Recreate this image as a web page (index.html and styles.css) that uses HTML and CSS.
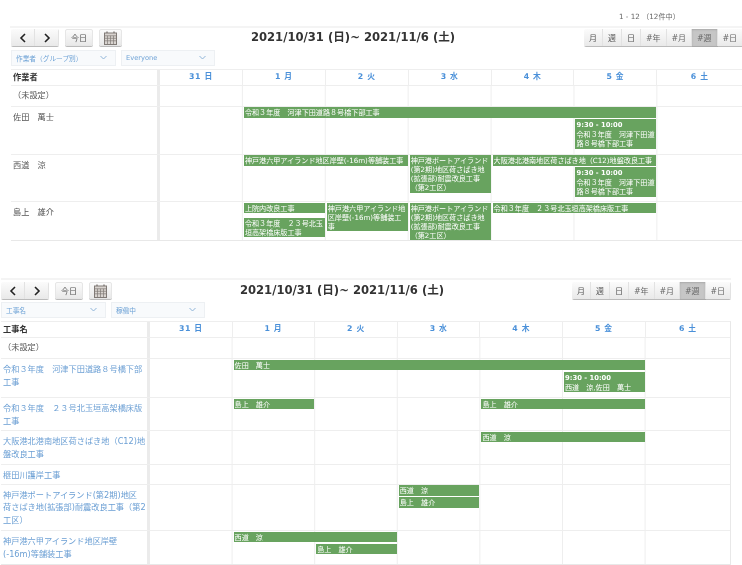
FILE: index.html
```html
<!DOCTYPE html>
<html lang="ja">
<head>
<meta charset="utf-8">
<title>週間スケジュール</title>
<link rel="stylesheet" href="styles.css">
</head>
<body>
<div class="pager">1 - 12 （12件中）</div>

<section class="panel panel-a">
  <div class="toolbar">
    <div class="btn-group nav"><button class="btn"><svg width="8" height="10" viewBox="0 0 8 10"><path d="M6 1 2 5l4 4" fill="none" stroke="#222" stroke-width="1.6"/></svg></button><button class="btn"><svg width="8" height="10" viewBox="0 0 8 10"><path d="M2 1l4 4-4 4" fill="none" stroke="#222" stroke-width="1.6"/></svg></button></div>
    <button class="btn solo today">今日</button>
    <button class="btn solo cal"><svg width="13" height="14" viewBox="0 0 13 14"><path d="M3 0.5v3M10 0.5v3" stroke="#807a76" stroke-width="1.4"/><rect x="0.5" y="2" width="12" height="11.5" fill="#d8d3cf" stroke="#807a76"/><path d="M0.5 4.8h12M0.5 7.3h12M0.5 9.8h12M3.5 4.8v8.7M6.5 4.8v8.7M9.5 4.8v8.7" stroke="#807a76" stroke-width=".7"/></svg></button>
    <h2 class="title">2021/10/31 (日)~ 2021/11/6 (土)</h2>
    <div class="btn-group views"><button class="btn v1">月</button><button class="btn v1">週</button><button class="btn v1">日</button><button class="btn v2">#年</button><button class="btn v2">#月</button><button class="btn v2 active">#週</button><button class="btn v2">#日</button></div>
  </div>
  <div class="filters">
    <div class="filter f1">作業者（グループ別）<svg width="7" height="5" viewBox="0 0 7 5"><path d="M.5 1l3 3 3-3" fill="none" stroke="#8fb4d8"/></svg></div>
    <div class="filter f2">Everyone<svg width="7" height="5" viewBox="0 0 7 5"><path d="M.5 1l3 3 3-3" fill="none" stroke="#8fb4d8"/></svg></div>
  </div>
  <div class="table">
    <div class="row head">
      <div class="name">作業者</div>
      <div class="days"><span>31 日</span><span>1 月</span><span>2 火</span><span>3 水</span><span>4 木</span><span>5 金</span><span>6 土</span></div>
    </div>
    <div class="row h21"><div class="name unset">（未設定）</div><div class="lane"></div></div>
    <div class="row h48">
      <div class="name plain">佐田　萬士</div>
      <div class="lane">
        <div class="ev c2 s5">令和３年度　河津下田道路８号橋下部工事</div>
        <div class="ev c6 s1 r2"><b>9:30 - 10:00</b><br>令和３年度　河津下田道路８号橋下部工事</div>
      </div>
    </div>
    <div class="row h47">
      <div class="name plain">西道　涼</div>
      <div class="lane">
        <div class="ev c2 s2 clip">神戸港六甲アイランド地区岸壁(-16m)等舗装工事</div>
        <div class="ev c4 s1 tall">神戸港ポートアイランド(第2期)地区荷さばき地(拡張部)耐震改良工事（第2工区）</div>
        <div class="ev c5 s2">大阪港北港南地区荷さばき地（C12)地盤改良工事</div>
        <div class="ev c6 s1 r2"><b>9:30 - 10:00</b><br>令和３年度　河津下田道路８号橋下部工事</div>
      </div>
    </div>
    <div class="row h38">
      <div class="name plain">島上　雄介</div>
      <div class="lane">
        <div class="ev c2 s1">上院内改良工事</div>
        <div class="ev c2 s1 r2">令和３年度　２３号北玉垣高架橋床版工事</div>
        <div class="ev c3 s1 tall">神戸港六甲アイランド地<br>区岸壁(-16m)等舗装工<br>事</div>
        <div class="ev c4 s1 tall">神戸港ポートアイランド(第2期)地区荷さばき地(拡張部)耐震改良工事（第2工区）</div>
        <div class="ev c5 s2">令和３年度　２３号北玉垣高架橋床版工事</div>
      </div>
    </div>
  </div>
</section>

<section class="panel panel-b">
  <div class="toolbar">
    <div class="btn-group nav"><button class="btn"><svg width="8" height="10" viewBox="0 0 8 10"><path d="M6 1 2 5l4 4" fill="none" stroke="#222" stroke-width="1.6"/></svg></button><button class="btn"><svg width="8" height="10" viewBox="0 0 8 10"><path d="M2 1l4 4-4 4" fill="none" stroke="#222" stroke-width="1.6"/></svg></button></div>
    <button class="btn solo today">今日</button>
    <button class="btn solo cal"><svg width="13" height="14" viewBox="0 0 13 14"><path d="M3 0.5v3M10 0.5v3" stroke="#807a76" stroke-width="1.4"/><rect x="0.5" y="2" width="12" height="11.5" fill="#d8d3cf" stroke="#807a76"/><path d="M0.5 4.8h12M0.5 7.3h12M0.5 9.8h12M3.5 4.8v8.7M6.5 4.8v8.7M9.5 4.8v8.7" stroke="#807a76" stroke-width=".7"/></svg></button>
    <h2 class="title">2021/10/31 (日)~ 2021/11/6 (土)</h2>
    <div class="btn-group views"><button class="btn v1">月</button><button class="btn v1">週</button><button class="btn v1">日</button><button class="btn v2">#年</button><button class="btn v2">#月</button><button class="btn v2 active">#週</button><button class="btn v2">#日</button></div>
  </div>
  <div class="filters">
    <div class="filter f1">工事名<svg width="7" height="5" viewBox="0 0 7 5"><path d="M.5 1l3 3 3-3" fill="none" stroke="#8fb4d8"/></svg></div>
    <div class="filter f2">稼働中<svg width="7" height="5" viewBox="0 0 7 5"><path d="M.5 1l3 3 3-3" fill="none" stroke="#8fb4d8"/></svg></div>
  </div>
  <div class="table">
    <div class="row head">
      <div class="name">工事名</div>
      <div class="days"><span>31 日</span><span>1 月</span><span>2 火</span><span>3 水</span><span>4 木</span><span>5 金</span><span>6 土</span></div>
    </div>
    <div class="row h21b"><div class="name unset">（未設定）</div><div class="lane"></div></div>
    <div class="row h39">
      <div class="name link">令和３年度　河津下田道路８号橋下部工事</div>
      <div class="lane">
        <div class="ev c2 s5">佐田　萬士</div>
        <div class="ev c6 s1 r2"><b>9:30 - 10:00</b><br>西道　涼,佐田　萬士</div>
      </div>
    </div>
    <div class="row h33">
      <div class="name link">令和３年度　２３号北玉垣高架橋床版工事</div>
      <div class="lane">
        <div class="ev c2 s1">島上　雄介</div>
        <div class="ev c5 s2">島上　雄介</div>
      </div>
    </div>
    <div class="row h33b">
      <div class="name link">大阪港北港南地区荷さばき地（C12)地盤改良工事</div>
      <div class="lane"><div class="ev c5 s2">西道　涼</div></div>
    </div>
    <div class="row h20">
      <div class="name link">榧田川護岸工事</div>
      <div class="lane"></div>
    </div>
    <div class="row h46">
      <div class="name link">神戸港ポートアイランド(第2期)地区<br>荷さばき地(拡張部)耐震改良工事（第2工区）</div>
      <div class="lane">
        <div class="ev c4 s1">西道　涼</div>
        <div class="ev c4 s1 r2">島上　雄介</div>
      </div>
    </div>
    <div class="row h33">
      <div class="name link">神戸港六甲アイランド地区岸壁<br>(-16m)等舗装工事</div>
      <div class="lane">
        <div class="ev c2 s2">西道　涼</div>
        <div class="ev c3 s1 r2">島上　雄介</div>
      </div>
    </div>
  </div>
</section>
</body>
</html>
```
FILE: styles.css
```css
* { box-sizing: border-box; }
html, body { margin: 0; padding: 0; background: #fff; }
body {
  width: 742px;
  height: 565px;
  overflow: hidden;
  font-family: "DejaVu Sans", "Noto Sans CJK JP", sans-serif;
  font-size: 8px;
  color: #555;
  filter: blur(.35px);
}

.pager {
  height: 26px;
  padding: 12px 62px 0 0;
  text-align: right;
  font-size: 7.2px;
  line-height: 9px;
  color: #666;
}

.panel { border-top: 2px solid #f4f4f4; }
.panel-a { --col: 82.9px; margin-left: 10px; width: 732px; }
.panel-b { --col: 82.6px; margin-top: 37px; margin-left: 1px; width: 730px; }
.panel-a .toolbar, .panel-a .filters, .panel-a .table { margin-left: 1px; }
.panel-a .toolbar { margin-right: -1px; }

.toolbar {
  display: flex;
  align-items: flex-start;
  height: 19px;
  padding-top: 1px;
}
.panel-b .toolbar { padding-top: 2px; }

.btn {
  display: flex;
  align-items: center;
  justify-content: center;
  height: 17px;
  padding: 0;
  border: 0;
  border-right: 1px solid #e2e2e2;
  background: linear-gradient(#fbfbfb, #e9e9e9);
  box-shadow: 0 1px 0 #bbb;
  font: inherit;
  font-size: 8px;
  color: #555;
}
.btn.solo { border: 1px solid #e6e6e6; border-radius: 2px; }
.btn-group { display: flex; border-radius: 2px; overflow: hidden; flex: none; padding-bottom: 1px; }
.nav .btn { width: 24px; }
.today { width: 28px; margin-left: 6px; flex: none; }
.cal { width: 23px; margin-left: 6px; flex: none; }
.title {
  flex: 1;
  margin: 0;
  text-align: center;
  font-size: 11.6px;
  line-height: 16px;
  font-weight: 700;
  color: #333;
}
.views .v1 { width: 19px; }
.views .v2 { width: 25.5px; color: #666; }
.views .active { background: #c6c6c6; box-shadow: inset 0 1px 2px #aaa, 0 1px 0 #aaa; }

.filters { display: flex; gap: 5px; height: 22px; padding-top: 3px; }
.filter {
  display: flex;
  align-items: center;
  justify-content: space-between;
  height: 15.5px;
  padding: 0 8px 0 4px;
  border: 1px solid #edf0f3;
  background: #f8fafc;
  color: #6fa3d6;
  font-size: 6.7px;
}
.f1 { width: 105px; }
.f2 { width: 94px; }

.table {
  border-bottom: 1px solid #e8e8e8;
  border-top: 1px solid #eee;
}
.panel-b .table { border-right: 1px solid #e8e8e8; }

.row { display: flex; border-bottom: 1px solid #eee; }
.row:last-child { border-bottom: 0; }
.name {
  flex: none;
  width: 149px;
  padding: 3px 0 0 2px;
  border-right: 3px solid #ebebeb;
  font-size: 8.2px;
  line-height: 12.7px;
}
.plain { padding-top: 4px; }
.link { color: #6b9fd4; padding-top: 4px; }

.head { height: 15.5px; }
.head .name { padding-top: 1px; font-weight: 700; color: #333; }
.days {
  flex: 1;
  display: grid;
  grid-template-columns: repeat(6, var(--col)) 1fr;
}
.days span {
  border-right: 1px solid #eee;
  text-align: center;
  line-height: 14px;
  font-size: 7.8px;
  font-weight: 700;
  letter-spacing: .6px;
  color: #4a90d9;
}
.days span:last-child { border-right: 0; }

.lane {
  flex: 1;
  display: grid;
  grid-template-columns: repeat(6, var(--col)) 1fr;
  grid-auto-rows: min-content;
  align-items: start;
  padding-right: 4px;
  background-image: linear-gradient(to right, transparent calc(var(--col) - .75px), #eee calc(var(--col) - .75px));
  background-size: var(--col) 100%;
  background-repeat: repeat-x;
  background-clip: content-box;
  overflow: hidden;
}

.h20 { height: 20px; }
.h21 { height: 21px; }
.h21b { height: 21.5px; }
.h33 { height: 33px; }
.h33b { height: 33.5px; }
.h38 { height: 38px; }
.h39 { height: 39px; }
.h46 { height: 46.5px; }
.h47 { height: 47.5px; }
.h48 { height: 48px; }

.ev {
  margin: .5px 1px 1px;
  padding: 1px 1px .6px;
  background: #68a35f;
  color: #fff;
  font-size: 7.1px;
  line-height: 9.1px;
  overflow: hidden;
}
.ev b { font-size: 6.8px; }
.clip { white-space: nowrap; }
.c2 { grid-column-start: 2; }
.c3 { grid-column-start: 3; }
.c4 { grid-column-start: 4; }
.c5 { grid-column-start: 5; }
.c6 { grid-column-start: 6; }
.s1 { grid-column-end: span 1; }
.s2 { grid-column-end: span 2; }
.s5 { grid-column-end: span 5; }
.r2 { grid-row-start: 2; }
.tall { grid-row: 1 / span 2; }
```
